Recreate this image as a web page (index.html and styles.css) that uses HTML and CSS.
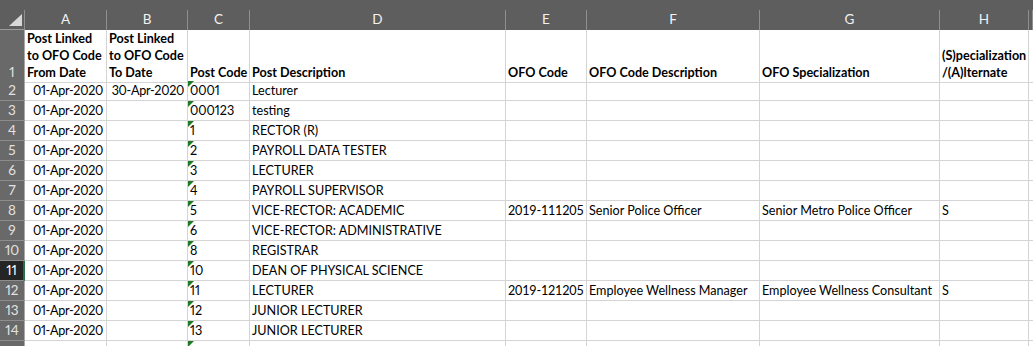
FILE: index.html
```html
<!DOCTYPE html>
<html>
<head>
<meta charset="utf-8">
<link rel="stylesheet" href="styles.css">
</head>
<body>
<div class="sheet">
  <div class="topstrip"></div>
  <div class="row colhdr">
    <div class="corner"><span class="corner-tri"></span></div>
    <div class="ch">A</div><div class="ch">B</div><div class="ch">C</div><div class="ch">D</div>
    <div class="ch">E</div><div class="ch">F</div><div class="ch">G</div><div class="ch">H</div><div class="ch"></div>
  </div>
  <div class="row r1">
    <div class="rh">1</div>
    <div class="c b">Post Linked<br>to OFO Code<br>From Date</div>
    <div class="c b">Post Linked<br>to OFO Code<br>To Date</div>
    <div class="c b">Post Code</div>
    <div class="c b">Post Description</div>
    <div class="c b">OFO Code</div>
    <div class="c b">OFO Code Description</div>
    <div class="c b">OFO Specialization</div>
    <div class="c b">(S)pecialization<br>/(A)lternate</div>
    <div class="c"></div>
  </div>
  <div class="row">
    <div class="rh">2</div><div class="c r">01-Apr-2020</div><div class="c r">30-Apr-2020</div><div class="c t">0001</div><div class="c">Lecturer</div><div class="c"></div><div class="c"></div><div class="c"></div><div class="c"></div><div class="c"></div>
  </div>
  <div class="row">
    <div class="rh">3</div><div class="c r">01-Apr-2020</div><div class="c"></div><div class="c t">000123</div><div class="c">testing</div><div class="c"></div><div class="c"></div><div class="c"></div><div class="c"></div><div class="c"></div>
  </div>
  <div class="row">
    <div class="rh">4</div><div class="c r">01-Apr-2020</div><div class="c"></div><div class="c t">1</div><div class="c">RECTOR (R)</div><div class="c"></div><div class="c"></div><div class="c"></div><div class="c"></div><div class="c"></div>
  </div>
  <div class="row">
    <div class="rh">5</div><div class="c r">01-Apr-2020</div><div class="c"></div><div class="c t">2</div><div class="c">PAYROLL DATA TESTER</div><div class="c"></div><div class="c"></div><div class="c"></div><div class="c"></div><div class="c"></div>
  </div>
  <div class="row">
    <div class="rh">6</div><div class="c r">01-Apr-2020</div><div class="c"></div><div class="c t">3</div><div class="c">LECTURER</div><div class="c"></div><div class="c"></div><div class="c"></div><div class="c"></div><div class="c"></div>
  </div>
  <div class="row">
    <div class="rh">7</div><div class="c r">01-Apr-2020</div><div class="c"></div><div class="c t">4</div><div class="c">PAYROLL SUPERVISOR</div><div class="c"></div><div class="c"></div><div class="c"></div><div class="c"></div><div class="c"></div>
  </div>
  <div class="row">
    <div class="rh">8</div><div class="c r">01-Apr-2020</div><div class="c"></div><div class="c t">5</div><div class="c">VICE-RECTOR: ACADEMIC</div><div class="c num">2019-111205</div><div class="c">Senior Police Officer</div><div class="c">Senior Metro Police Officer</div><div class="c">S</div><div class="c"></div>
  </div>
  <div class="row">
    <div class="rh">9</div><div class="c r">01-Apr-2020</div><div class="c"></div><div class="c t">6</div><div class="c">VICE-RECTOR: ADMINISTRATIVE</div><div class="c"></div><div class="c"></div><div class="c"></div><div class="c"></div><div class="c"></div>
  </div>
  <div class="row">
    <div class="rh">10</div><div class="c r">01-Apr-2020</div><div class="c"></div><div class="c t">8</div><div class="c">REGISTRAR</div><div class="c"></div><div class="c"></div><div class="c"></div><div class="c"></div><div class="c"></div>
  </div>
  <div class="row">
    <div class="rh sel">11</div><div class="c r">01-Apr-2020</div><div class="c"></div><div class="c t">10</div><div class="c">DEAN OF PHYSICAL SCIENCE</div><div class="c"></div><div class="c"></div><div class="c"></div><div class="c"></div><div class="c"></div>
  </div>
  <div class="row">
    <div class="rh">12</div><div class="c r">01-Apr-2020</div><div class="c"></div><div class="c t">11</div><div class="c">LECTURER</div><div class="c num">2019-121205</div><div class="c">Employee Wellness Manager</div><div class="c">Employee Wellness Consultant</div><div class="c">S</div><div class="c"></div>
  </div>
  <div class="row">
    <div class="rh">13</div><div class="c r">01-Apr-2020</div><div class="c"></div><div class="c t">12</div><div class="c">JUNIOR LECTURER</div><div class="c"></div><div class="c"></div><div class="c"></div><div class="c"></div><div class="c"></div>
  </div>
  <div class="row">
    <div class="rh">14</div><div class="c r">01-Apr-2020</div><div class="c"></div><div class="c t">13</div><div class="c">JUNIOR LECTURER</div><div class="c"></div><div class="c"></div><div class="c"></div><div class="c"></div><div class="c"></div>
  </div>
  <div class="row last">
    <div class="rh"></div><div class="c"></div><div class="c"></div><div class="c t"></div><div class="c"></div><div class="c"></div><div class="c"></div><div class="c"></div><div class="c"></div><div class="c"></div>
  </div>
</div>
</body>
</html>
```
FILE: styles.css
```css
* { box-sizing: border-box; }
html, body { margin: 0; padding: 0; background: #ffffff; overflow: hidden; }
body {
  font-family: Lato, "Open Sans", sans-serif;
  font-size: 12.6px;
  font-variant-numeric: proportional-nums;
  color: #000000;
}
.sheet { width: 1033px; }
.topstrip { height: 10px; background: #5e5e5e; }
.row {
  display: grid;
  grid-template-columns: 25px 82px 81px 62px 256px 81px 173px 180px 89px 1fr;
  height: 20px;
}
.row.colhdr { height: 20px; background: #5e5e5e; }
.row.r1 { height: 51px; }
.corner {
  position: relative;
  border-right: 1px solid #8f8f8f;
  border-bottom: 1px solid #9a9a9a;
}
.corner-tri {
  position: absolute;
  right: 2px;
  bottom: 3px;
  width: 0; height: 0;
  border-left: 13px solid transparent;
  border-bottom: 12px solid #d8d8d8;
}
.ch {
  color: #f2f2f2;
  text-align: center;
  line-height: 19px;
  font-size: 13.5px;
  border-right: 1px solid #8f8f8f;
}
.rh {
  background: #696969;
  color: #e2e2e2;
  font-size: 13.5px;
  border-bottom: 1px solid #8d8d8d;
  border-right: 1px solid #a8a8a8;
  display: flex;
  align-items: flex-end;
  justify-content: center;
  line-height: 17px;
  padding-bottom: 1px;
}
.rh.sel {
  background: #252525;
  color: #ffffff;
  border-right: 2px solid #217346;
}
.c {
  border-right: 1px solid #d4d4d4;
  border-bottom: 1px solid #d4d4d4;
  padding: 0 2px 1px 2px;
  display: flex;
  align-items: flex-end;
  line-height: 17px;
  white-space: nowrap;
  overflow: visible;
}
.c.b { font-weight: bold; }
.c.r { justify-content: flex-end; padding-right: 3px; letter-spacing: -0.3px; }
.c.num { font-variant-numeric: tabular-nums; letter-spacing: -0.2px; }
.c.t { position: relative; }
.c.t::before {
  content: "";
  position: absolute;
  left: 0;
  top: 0;
  width: 0; height: 0;
  border-top: 6px solid #1f7a28;
  border-right: 6px solid transparent;
}
```
